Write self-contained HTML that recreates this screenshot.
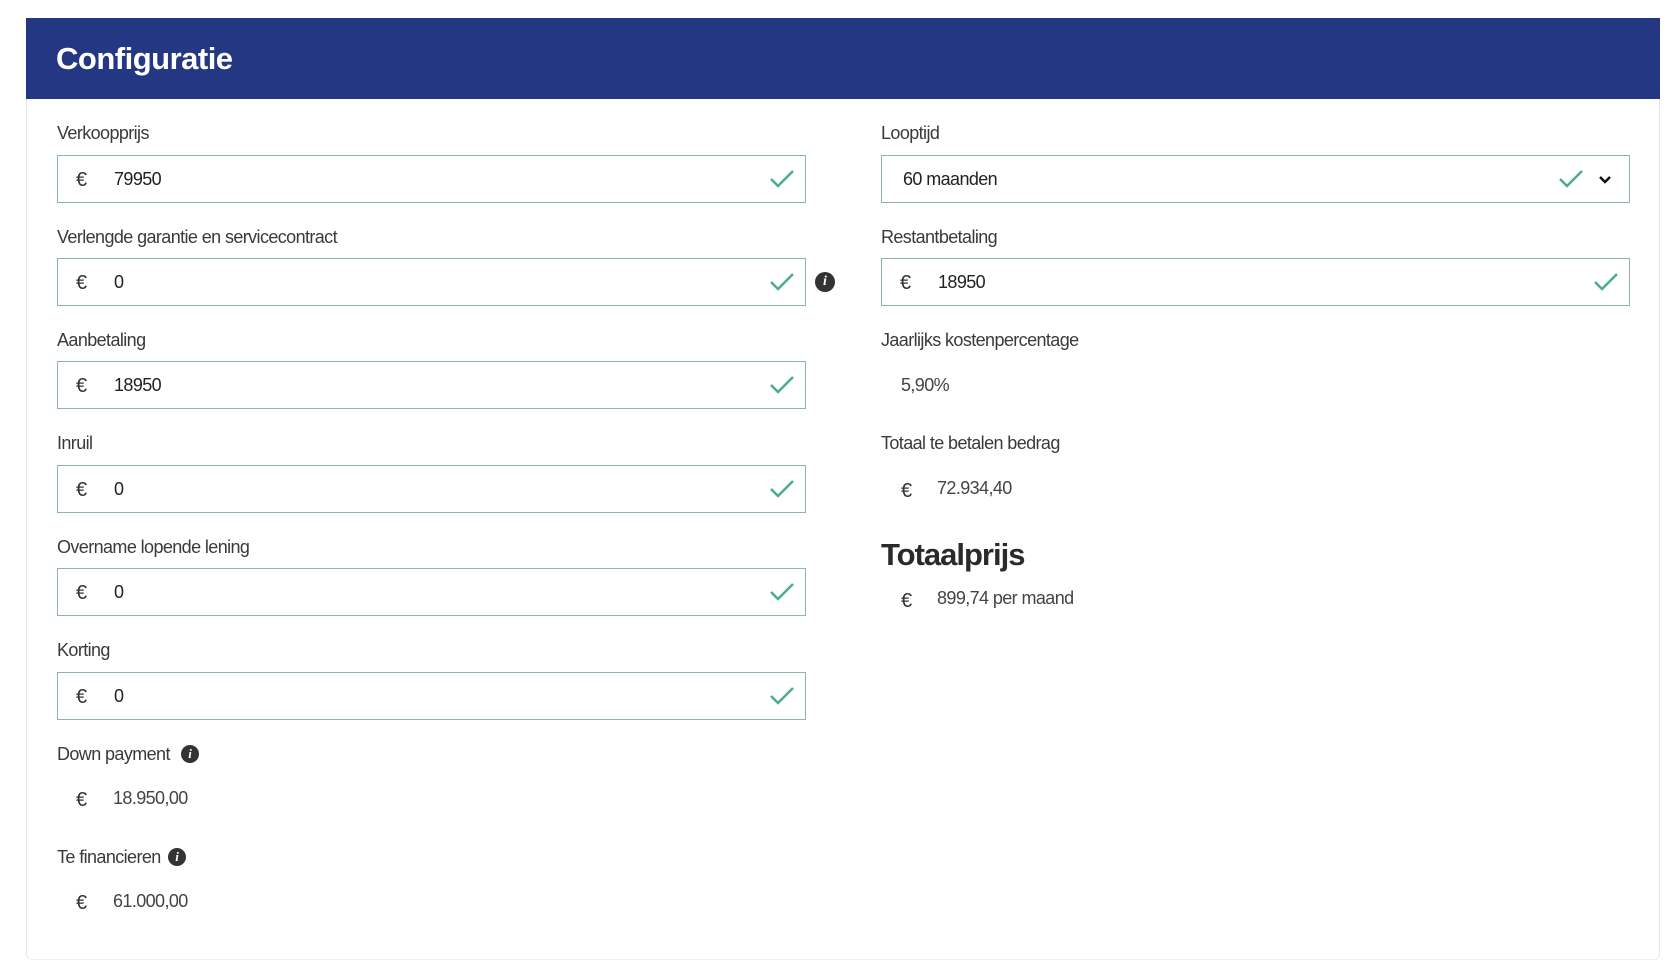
<!DOCTYPE html>
<html><head><meta charset="utf-8"><style>
*{box-sizing:border-box;margin:0;padding:0}
body{width:1672px;height:960px;background:#fff;position:relative;overflow:hidden;font-family:"Liberation Sans",sans-serif;color:#333;font-size:18px;letter-spacing:-0.6px}
.card{position:absolute;left:26px;top:18px;width:1634px;height:942px;border-left:1px solid #e4e6ea;border-right:1px solid #e4e6ea;border-bottom:1px solid #eef0f2;border-radius:0 0 6px 6px}
.hdr{position:absolute;left:26px;top:18px;width:1634px;height:81px;background:#243782;color:#fff;font-weight:bold;font-size:31px;padding-left:30px;line-height:81px;letter-spacing:-0.5px}
.lbl{position:absolute;font-size:18px;color:#3a3a3a;line-height:22px}
.inp{position:absolute;height:48px;border:1.5px solid #8ab8a6;background:#fff}
.eur{position:absolute;font-size:20px;color:#333}
.val{position:absolute;font-size:18px;color:#222}
.chk{position:absolute;width:26px;height:20px}
.info{position:absolute;width:20px;height:20px;border-radius:50%;background:#333;color:#fff;font:bold 14px "Liberation Serif",serif;text-align:center;line-height:20px;font-style:italic;letter-spacing:0}
.big{position:absolute;font-weight:bold;font-size:31px;color:#2a2a2a;letter-spacing:-1px}
</style></head><body>
<div class="card"></div>
<div class="hdr">Configuratie</div>

<div class="lbl" style="left:57px;top:122px">Verkoopprijs</div>
<div class="inp" style="left:57px;top:155px;width:749px"></div>
<div class="eur" style="left:76px;top:169px">€</div><div class="val" style="left:114px;top:169px">79950</div>

<div class="lbl" style="left:57px;top:226px">Verlengde garantie en servicecontract</div>
<div class="inp" style="left:57px;top:258px;width:749px"></div>
<div class="eur" style="left:76px;top:272px">€</div><div class="val" style="left:114px;top:272px">0</div>
<div class="info" style="left:815px;top:272px">i</div>

<div class="lbl" style="left:57px;top:329px">Aanbetaling</div>
<div class="inp" style="left:57px;top:361px;width:749px"></div>
<div class="eur" style="left:76px;top:375px">€</div><div class="val" style="left:114px;top:375px">18950</div>

<div class="lbl" style="left:57px;top:432px">Inruil</div>
<div class="inp" style="left:57px;top:465px;width:749px"></div>
<div class="eur" style="left:76px;top:479px">€</div><div class="val" style="left:114px;top:479px">0</div>

<div class="lbl" style="left:57px;top:536px">Overname lopende lening</div>
<div class="inp" style="left:57px;top:568px;width:749px"></div>
<div class="eur" style="left:76px;top:582px">€</div><div class="val" style="left:114px;top:582px">0</div>

<div class="lbl" style="left:57px;top:639px">Korting</div>
<div class="inp" style="left:57px;top:672px;width:749px"></div>
<div class="eur" style="left:76px;top:686px">€</div><div class="val" style="left:114px;top:686px">0</div>

<div class="lbl" style="left:57px;top:743px">Down payment</div>
<div class="info" style="left:181px;top:745px;width:18px;height:18px;line-height:18px;font-size:13px">i</div>
<div class="eur" style="left:76px;top:789px">€</div><div class="val" style="left:113px;top:788px;color:#444">18.950,00</div>

<div class="lbl" style="left:57px;top:846px">Te financieren</div>
<div class="info" style="left:168px;top:848px;width:18px;height:18px;line-height:18px;font-size:13px">i</div>
<div class="eur" style="left:76px;top:892px">€</div><div class="val" style="left:113px;top:891px;color:#444">61.000,00</div>

<div class="lbl" style="left:881px;top:122px">Looptijd</div>
<div class="inp" style="left:881px;top:155px;width:749px"></div>
<div class="val" style="left:903px;top:169px">60 maanden</div>
<svg style="position:absolute;left:1597px;top:174px" width="16" height="12" viewBox="0 0 16 12"><path d="M3 3l5 5 5-5" fill="none" stroke="#111" stroke-width="2.5"/></svg>

<div class="lbl" style="left:881px;top:226px">Restantbetaling</div>
<div class="inp" style="left:881px;top:258px;width:749px"></div>
<div class="eur" style="left:900px;top:272px">€</div><div class="val" style="left:938px;top:272px">18950</div>

<div class="lbl" style="left:881px;top:329px">Jaarlijks kostenpercentage</div>
<div class="val" style="left:901px;top:375px;color:#444">5,90%</div>

<div class="lbl" style="left:881px;top:432px">Totaal te betalen bedrag</div>
<div class="eur" style="left:901px;top:480px">€</div><div class="val" style="left:937px;top:478px;color:#444">72.934,40</div>

<div class="big" style="left:881px;top:537px">Totaalprijs</div>
<div class="eur" style="left:901px;top:590px">€</div><div class="val" style="left:937px;top:588px;color:#444">899,74 per maand</div>

<svg class="chk" style="left:769px;top:169px" viewBox="0 0 26 20"><path d="M2 10l7 7L24 2" fill="none" stroke="#4bae86" stroke-width="2.5"/></svg>
<svg class="chk" style="left:769px;top:272px" viewBox="0 0 26 20"><path d="M2 10l7 7L24 2" fill="none" stroke="#4bae86" stroke-width="2.5"/></svg>
<svg class="chk" style="left:769px;top:375px" viewBox="0 0 26 20"><path d="M2 10l7 7L24 2" fill="none" stroke="#4bae86" stroke-width="2.5"/></svg>
<svg class="chk" style="left:769px;top:479px" viewBox="0 0 26 20"><path d="M2 10l7 7L24 2" fill="none" stroke="#4bae86" stroke-width="2.5"/></svg>
<svg class="chk" style="left:769px;top:582px" viewBox="0 0 26 20"><path d="M2 10l7 7L24 2" fill="none" stroke="#4bae86" stroke-width="2.5"/></svg>
<svg class="chk" style="left:769px;top:686px" viewBox="0 0 26 20"><path d="M2 10l7 7L24 2" fill="none" stroke="#4bae86" stroke-width="2.5"/></svg>
<svg class="chk" style="left:1558px;top:169px" viewBox="0 0 26 20"><path d="M2 10l7 7L24 2" fill="none" stroke="#4bae86" stroke-width="2.5"/></svg>
<svg class="chk" style="left:1593px;top:272px" viewBox="0 0 26 20"><path d="M2 10l7 7L24 2" fill="none" stroke="#4bae86" stroke-width="2.5"/></svg>
</body></html>
